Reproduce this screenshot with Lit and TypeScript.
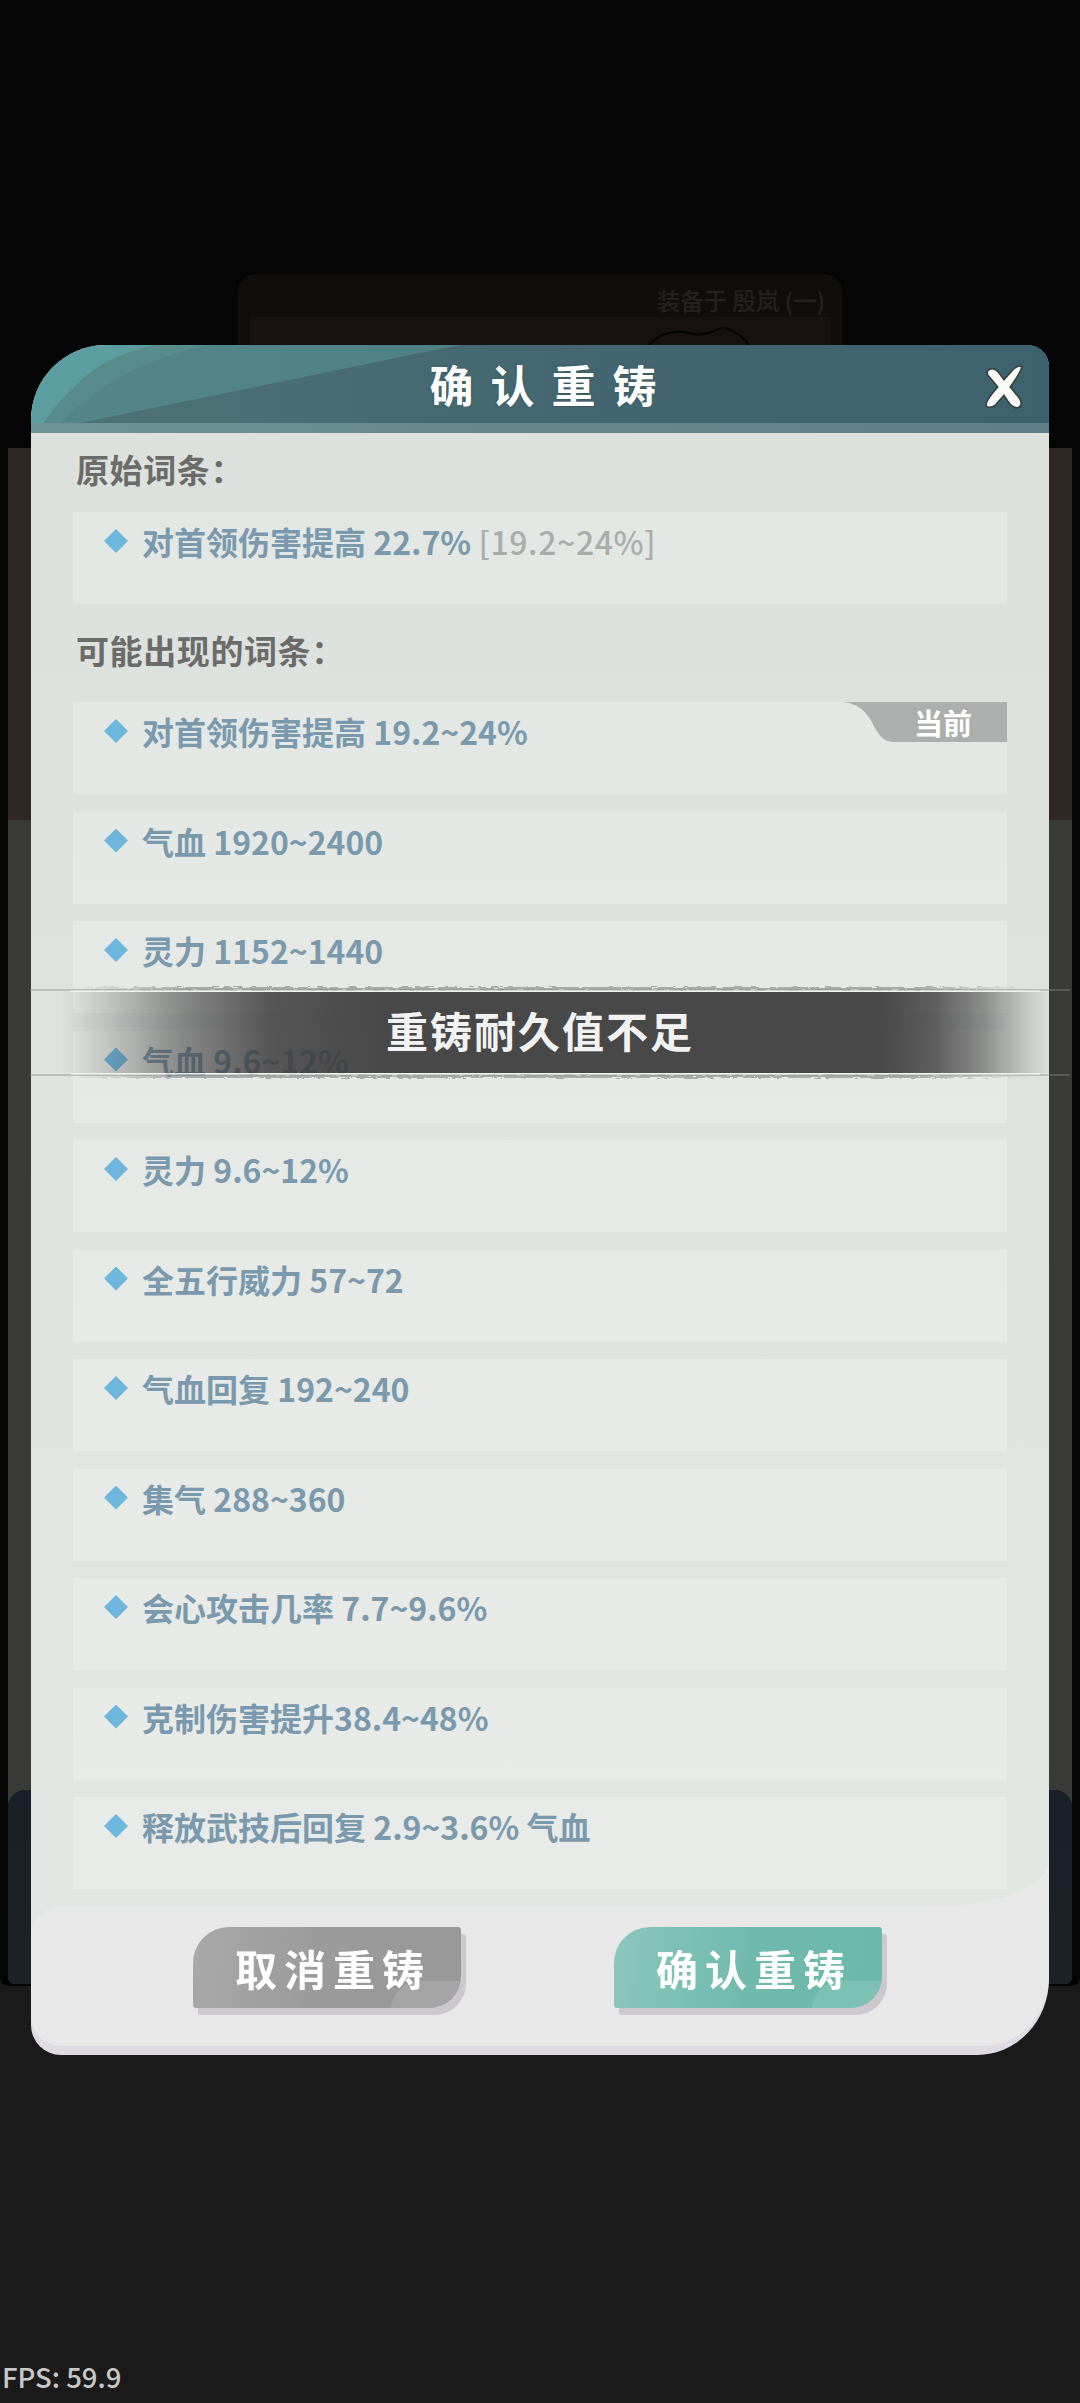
import { LitElement, html, css } from "lit";
import { customElement } from "lit/decorators.js";

const ROWS = [
  "气血 1920~2400",
  "灵力 1152~1440",
  "气血 9.6~12%",
  "灵力 9.6~12%",
  "全五行威力 57~72",
  "气血回复 192~240",
  "集气 288~360",
  "会心攻击几率 7.7~9.6%",
  "克制伤害提升38.4~48%",
  "释放武技后回复 2.9~3.6% 气血",
];

@customElement("app-root")
export class AppRoot extends LitElement {
  static styles = css`
    :host {
      display: block;
      width: 1080px;
      height: 2403px;
      overflow: hidden;
      font-family: "Noto Sans CJK SC", "Noto Sans", sans-serif;
    }
    .page {
      position: relative;
      height: 2403px;
      background: #1a1a1a;
      display: flex;
      flex-direction: column;
    }
    /* dimmed scene behind the dialog */
    .scene {
      height: 1986px;
      padding: 274px 8px 2px;
      box-sizing: border-box;
      background: #050505;
      border-radius: 0 0 8px 8px;
      display: flex;
      flex-direction: column;
    }
    .card {
      height: 174px;
      margin: 0 230px;
      box-sizing: border-box;
      background: #0f0e0c;
      border-radius: 18px 18px 0 0;
      padding-top: 10px;
      display: flex;
      flex-direction: column;
    }
    .card-tag {
      height: 33px;
      padding-right: 17px;
      text-align: right;
      font-size: 23.5px;
      line-height: 33px;
      font-weight: 500;
      color: #232220;
    }
    .card-art {
      flex: 1;
      margin: 0 11px 0 12px;
      background: #17120f;
      display: flex;
      justify-content: flex-end;
      padding: 10px 79px 0 0;
    }
    .card-art svg {
      width: 107px;
      height: 20px;
      display: block;
    }
    .strip {
      flex: 1;
      display: flex;
      flex-direction: column;
      border-radius: 0 0 6px 6px;
      overflow: hidden;
    }
    .seg-a {
      height: 372px;
      background: #2e2724;
    }
    .seg-b {
      height: 970px;
      background: #3a3b39;
    }
    .seg-c {
      flex: 1;
      background: linear-gradient(180deg, #1a2027, #1c2128);
      border-radius: 18px 18px 0 0;
      box-shadow: 0 -18px 0 #3a3b39;
    }
    .fps {
      flex: 1;
      display: flex;
      align-items: flex-end;
      padding: 0 0 9px 2px;
      font-size: 27.5px;
      line-height: 36px;
      font-weight: 500;
      color: #c8c8c8;
    }

    /* dialog */
    .overlay {
      position: absolute;
      inset: 0;
      padding: 345px 31px 0;
    }
    .modal {
      height: 1710px;
      display: flex;
      flex-direction: column;
      background: linear-gradient(180deg, #e8e8e8 calc(100% - 90px), #dedbe2 calc(100% - 90px));
      border-radius: 75px 22px 72px 30px / 75px 22px 76px 30px;
      overflow: hidden;
    }
    .head {
      position: relative;
      height: 88px;
      flex: none;
      box-sizing: border-box;
      padding: 4px 0 14px;
      display: flex;
      align-items: center;
      justify-content: center;
    }
    .head-bg {
      position: absolute;
      inset: 0;
      width: 100%;
      height: 100%;
    }
    .title {
      position: relative;
      font-size: 44px;
      line-height: 60px;
      font-weight: 700;
      letter-spacing: 17px;
      padding-left: 23px;
      color: #fff;
      text-shadow: 0 0 2px #2f4a50;
    }
    .close {
      position: absolute;
      left: 953px;
      top: 19px;
      width: 40px;
      height: 47px;
    }
    .body {
      flex: 1;
      box-sizing: border-box;
      padding: 14px 42px 17px;
      background: linear-gradient(180deg, #dce1de, #e2e6e2);
      border-radius: 0 0 110px 0 / 0 0 46px 0;
      display: flex;
      flex-direction: column;
    }
    .label {
      height: 44px;
      padding-left: 3px;
      font-size: 33px;
      line-height: 44px;
      font-weight: 700;
      letter-spacing: 0.6px;
      color: #6b6b6a;
    }
    .label-a {
      margin-bottom: 21px;
    }
    .label-b {
      margin: 24px 0 30px;
    }
    .rows {
      display: flex;
      flex-direction: column;
      gap: 17.5px;
    }
    .row {
      position: relative;
      height: 92px;
      flex: none;
      box-sizing: border-box;
      padding-left: 31px;
      background: rgba(255, 255, 250, 0.22);
      display: flex;
      align-items: flex-start;
    }
    .line {
      height: 58px;
      display: flex;
      align-items: center;
      gap: 14px;
      font-size: 32px;
      font-weight: 700;
      color: #7b99ad;
      white-space: pre;
    }
    .dia {
      width: 24px;
      height: 24px;
      flex: none;
      background: #6db6dc;
      clip-path: polygon(50% 0, 100% 50%, 50% 100%, 0 50%);
    }
    .range {
      color: #a9aeac;
      font-weight: 500;
      letter-spacing: 0.6px;
    }
    .now {
      position: absolute;
      right: 0;
      top: 0;
      width: 164px;
      height: 40px;
      box-sizing: border-box;
      padding-left: 71px;
      background: #acafad;
      clip-path: path("M0 0 H164 V40 H52 C42 40 38 36 32 26 C25 12 18 2 0 0 Z");
      font-size: 29px;
      line-height: 40px;
      font-weight: 700;
      color: #fff;
    }
    .foot-wrap {
      height: 150px;
      flex: none;
      background: linear-gradient(90deg, #e2e6e2 50%, transparent 50%) top / 100% 40px no-repeat;
    }
    .foot {
      height: 140px;
      box-sizing: border-box;
      padding: 21px 0 0 162px;
      background: #e8e8e8;
      border-radius: 32px 0 66px 30px / 32px 0 70px 30px;
      display: flex;
      gap: 153px;
    }
    .btn {
      position: relative;
      width: 268px;
      height: 81px;
      flex: none;
      overflow: hidden;
      display: flex;
      align-items: center;
      justify-content: center;
      border-radius: 36px 3px 32px 3px;
      font-size: 42px;
      font-weight: 700;
      letter-spacing: 7px;
      padding-left: 12px;
      box-sizing: border-box;
      color: #fff;
    }
    .btn span {
      position: relative;
      z-index: 1;
    }
    .btn::after {
      content: "";
      position: absolute;
      right: -2px;
      bottom: -2px;
      width: 72px;
      height: 29px;
      border-radius: 30px 0 0 0;
    }
    .shadow {
      filter: drop-shadow(5px 7px 0 #cbc9cd);
    }
    .grey {
      background: linear-gradient(100deg, #a9a9a9, #9b9b9b 45%, #989898);
    }
    .grey::after {
      background: #a5a5a5;
    }
    .teal {
      background: linear-gradient(100deg, #8cc6bc, #70baad 50%, #6cb9ab);
    }
    .teal::after {
      background: #7dc1b5;
    }

    /* toast */
    .toast {
      position: absolute;
      left: 0;
      right: 0;
      top: 983px;
      display: flex;
      flex-direction: column;
    }
    .brush {
      display: block;
      width: 1080px;
      height: 9px;
      overflow: visible;
    }
    .band {
      height: 81px;
      box-sizing: border-box;
      padding-bottom: 6px;
      display: flex;
      align-items: center;
      justify-content: center;
      background: linear-gradient(
        90deg,
        rgba(60, 60, 60, 0) 60px,
        rgba(60, 60, 60, 0.22) 110px,
        rgba(60, 60, 60, 0.55) 180px,
        rgba(60, 60, 60, 0.85) 270px,
        rgba(60, 60, 60, 0.93) 380px,
        rgba(60, 60, 60, 0.93) 880px,
        rgba(60, 60, 60, 0.8) 935px,
        rgba(60, 60, 60, 0.52) 985px,
        rgba(60, 60, 60, 0.2) 1022px,
        rgba(60, 60, 60, 0) 1052px
      );
      font-size: 42px;
      font-weight: 700;
      letter-spacing: 2px;
      color: #f2f2f2;
    }
  `;

  private brush(flip: boolean) {
    return html`<svg class="brush" viewBox="0 0 1080 9" style=${flip ? "transform:scaleY(-1)" : ""}>
      <defs>
        <filter id=${flip ? "rb" : "ra"} x="0" y="-150%" width="100%" height="400%">
          <feTurbulence type="fractalNoise" baseFrequency="0.12 0.7" numOctaves="3" seed=${flip ? 9 : 4} result="n" />
          <feDisplacementMap in="SourceGraphic" in2="n" scale="5" xChannelSelector="R" yChannelSelector="G" />
        </filter>
        <linearGradient id=${flip ? "gb" : "ga"} x1="0" x2="1" y1="0" y2="0">
          <stop offset="0" stop-color="#777" stop-opacity="0" />
          <stop offset="0.12" stop-color="#777" stop-opacity="0.55" />
          <stop offset="0.88" stop-color="#777" stop-opacity="0.55" />
          <stop offset="1" stop-color="#777" stop-opacity="0" />
        </linearGradient>
      </defs>
      <rect x="70" y="4" width="960" height="3" fill=${flip ? "url(#gb)" : "url(#ga)"} filter=${flip ? "url(#rb)" : "url(#ra)"} />
      <rect x="30" y="6.5" width="1040" height="1" fill="#8a8a8a" opacity="0.8" />
      <rect x="70" y="7.5" width="970" height="1.5" fill="#f4f4f2" opacity="0.85" />
    </svg>`;
  }

  render() {
    return html`
      <div class="page">
        <div class="scene">
          <div class="card">
            <div class="card-tag">装备于 殷岚 (一)</div>
            <div class="card-art">
              <svg viewBox="0 0 107 20">
                <path d="M2 20C14 6 30 2 48 7C60 9 70 4 78 0C88 3 100 10 105 20" fill="none" stroke="#050505" stroke-width="2" />
              </svg>
            </div>
          </div>
          <div class="strip">
            <div class="seg-a"></div>
            <div class="seg-b"></div>
            <div class="seg-c"></div>
          </div>
        </div>
        <div class="fps">FPS: 59.9</div>

        <div class="overlay">
          <div class="modal">
            <div class="head">
              <svg class="head-bg" viewBox="0 0 1018 88" preserveAspectRatio="none">
                <defs>
                  <linearGradient id="hm" x1="0" x2="1" y1="0" y2="0">
                    <stop offset="0" stop-color="#548689" />
                    <stop offset="0.4" stop-color="#4f8083" />
                    <stop offset="1" stop-color="#3d626e" />
                  </linearGradient>
                  <linearGradient id="hd" x1="0" x2="1" y1="0" y2="0">
                    <stop offset="0" stop-color="#4e7375" />
                    <stop offset="0.5" stop-color="#436670" />
                    <stop offset="1" stop-color="#3d626e" />
                  </linearGradient>
                  <linearGradient id="hb" x1="0" x2="1" y1="0" y2="0">
                    <stop offset="0" stop-color="#6f9496" />
                    <stop offset="0.5" stop-color="#658689" />
                    <stop offset="1" stop-color="#5e7f89" />
                  </linearGradient>
                </defs>
                <rect width="1018" height="88" fill="#5c9d9f" />
                <path d="M12 78C40 40 70 10 125 0H1018V78Z" fill="#578b8c" />
                <path d="M30 78C60 45 110 15 175 0H1018V78Z" fill="url(#hm)" />
                <path d="M49 78L389 8L430 0H1018V78Z" fill="url(#hd)" />
                <rect y="78" width="1018" height="10" fill="url(#hb)" />
              </svg>
              <div class="title">确认重铸</div>
              <svg class="close" viewBox="0 0 38 45">
                <path
                  d="M3 7C6 3 10 4 13 7L19 15L28 5C31 2 35 1 36 3C35 8 30 15 25 22L34 33C37 38 35 42 31 42C27 42 24 38 19 30L11 39C8 42 3 42 2 40C1 37 4 32 13 22L3 10Z"
                  fill="#fafaf6"
                  stroke="#37403f"
                  stroke-width="1.6"
                />
              </svg>
            </div>
            <div class="body">
              <div class="label label-a">原始词条：</div>
              <div class="row">
                <div class="line"><i class="dia"></i><span>对首领伤害提高 22.7% <span class="range">[19.2~24%]</span></span></div>
              </div>
              <div class="label label-b">可能出现的词条：</div>
              <div class="rows">
                <div class="row">
                  <div class="line"><i class="dia"></i><span>对首领伤害提高 19.2~24%</span></div>
                  <div class="now">当前</div>
                </div>
                ${ROWS.map(
                  (t) => html`<div class="row"><div class="line"><i class="dia"></i><span>${t}</span></div></div>`
                )}
              </div>
            </div>
            <div class="foot-wrap">
              <div class="foot">
                <div class="shadow"><div class="btn grey"><span>取消重铸</span></div></div>
                <div class="shadow"><div class="btn teal"><span>确认重铸</span></div></div>
              </div>
            </div>
          </div>
        </div>

        <div class="toast">
          ${this.brush(false)}
          <div class="band">重铸耐久值不足</div>
          ${this.brush(true)}
        </div>
      </div>
    `;
  }
}
